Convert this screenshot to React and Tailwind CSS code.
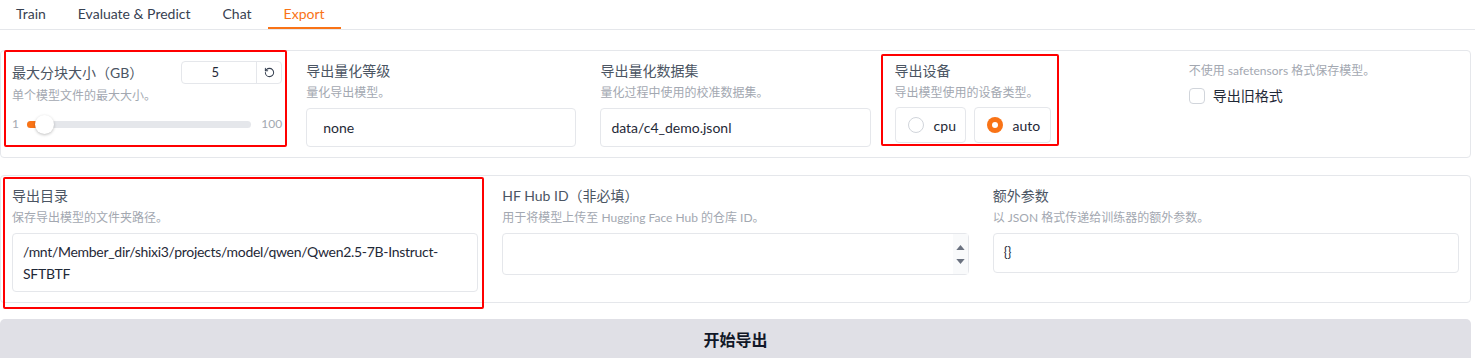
import { RotateCw } from 'lucide-react'

const font = { fontFamily: '"Source Sans Pro", Lato, "Noto Sans CJK SC", sans-serif' }

const Label = ({ children }) => (
    <div className="text-[14px] leading-[20px] text-[#4b5563]">{children}</div>
)

const Info = ({ children }) => (
    <div className="text-[12px] leading-[18px] text-[#a3a8b1] mt-[3px]">{children}</div>
)

// red annotation frame drawn over a block
const Marked = ({ children, className, frame }) => (
    <div className={`relative ${className || ''}`}>
        {children}
        <div className={`absolute border-2 border-[#ff0000] rounded-[2px] pointer-events-none ${frame}`}></div>
    </div>
)

const App = () => {
    const tabs = ['Train', 'Evaluate & Predict', 'Chat', 'Export']

    return (
        <div className="w-[1475px] h-[358px] overflow-hidden bg-white" style={font}>
            {/* tab bar */}
            <div className="flex border-b border-[#e5e7eb] h-[30px]">
                {tabs.map((t) => (
                    <div
                        key={t}
                        className={`px-4 text-[14px] leading-[28px] ${t === 'Export' ? 'text-[#f97316] border-b-2 border-[#f97316]' : 'text-[#374151]'}`}
                    >
                        {t}
                    </div>
                ))}
            </div>

            {/* first panel */}
            <div className="mt-[20px] mr-[4px] border border-[#e5e7eb] rounded-[4px] px-[11px] pt-[10px] grid grid-cols-5 gap-x-[24px] h-[108px]">
                <Marked frame="-left-[8px] -right-[5px] -top-[11px] -bottom-[14px]" className="h-[72px]">
                    <div className="flex items-center justify-between">
                        <Label>最大分块大小（GB）</Label>
                        <div className="flex h-[23px] border border-[#e5e7eb] rounded-[4px]">
                            <div className="w-[74px] pr-[8px] text-center text-[13px] leading-[21px] text-[#1f2937]">5</div>
                            <div className="w-[25px] border-l border-[#e5e7eb] flex items-center justify-center text-[#374151]">
                                <RotateCw size={11} strokeWidth={2.2} className="-scale-x-100" />
                            </div>
                        </div>
                    </div>
                    <Info>单个模型文件的最大大小。</Info>
                    <div className="flex items-center mt-[10px] text-[12px] text-[#a3a8b1]">
                        <span className="w-[15px]">1</span>
                        <div className="relative flex-1 h-[7px] bg-[#e5e7eb] rounded-full">
                            <div className="absolute left-0 top-0 h-[7px] w-[14px] bg-[#f97316] rounded-full"></div>
                            <div className="absolute left-[8px] -top-[6px] w-[19px] h-[19px] rounded-full bg-white shadow-[0_1px_3px_rgba(0,0,0,0.25)]"></div>
                        </div>
                        <span className="ml-[10px]">100</span>
                    </div>
                </Marked>

                <div>
                    <Label>导出量化等级</Label>
                    <Info>量化导出模型。</Info>
                    <div className="mt-[6px] h-[39px] border border-[#e5e7eb] rounded-[4px] flex items-center px-[16px] text-[14px] text-[#1f2937]">
                        none
                    </div>
                </div>

                <div>
                    <Label>导出量化数据集</Label>
                    <Info>量化过程中使用的校准数据集。</Info>
                    <div className="mt-[6px] h-[39px] border border-[#e5e7eb] rounded-[4px] flex items-center px-[10px] text-[14px] text-[#1f2937]">
                        data/c4_demo.jsonl
                    </div>
                </div>

                <div>
                    <Marked frame="-left-[14px] -right-[8px] -top-[7px] -bottom-[3px]" className="w-[156px]">
                        <Label>导出设备</Label>
                        <Info>导出模型使用的设备类型。</Info>
                        <div className="flex gap-[8px] mt-[5px]">
                            <div className="w-[71px] h-[36px] border border-[#e5e7eb] rounded-[4px] flex items-center gap-[10px] pl-[12px] text-[14px] text-[#1f2937]">
                                <span className="w-[16px] h-[16px] rounded-full border border-[#d1d5db]"></span>
                                cpu
                            </div>
                            <div className="w-[77px] h-[36px] border border-[#e5e7eb] rounded-[4px] flex items-center gap-[10px] pl-[12px] text-[14px] text-[#1f2937]">
                                <span className="w-[16px] h-[16px] rounded-full bg-[#f97316] flex items-center justify-center">
                                    <span className="w-[6px] h-[6px] rounded-full bg-white"></span>
                                </span>
                                auto
                            </div>
                        </div>
                    </Marked>
                </div>

                <div>
                    <div className="text-[12px] leading-[18px] text-[#a3a8b1] mt-[1px]">不使用 safetensors 格式保存模型。</div>
                    <label className="flex items-center gap-[8px] mt-[5px] text-[14px] text-[#1f2937]">
                        <span className="w-[16px] h-[16px] rounded-[4px] border border-[#d1d5db]"></span>
                        导出旧格式
                    </label>
                </div>
            </div>

            {/* second panel */}
            <div className="mt-[17px] mr-[4px] border border-[#e5e7eb] rounded-[4px] px-[11px] pt-[10px] grid grid-cols-3 gap-x-[24px] h-[128px]">
                <Marked frame="-left-[9px] -right-[6px] -top-[9px] -bottom-[7px]">
                    <Label>导出目录</Label>
                    <Info>保存导出模型的文件夹路径。</Info>
                    <div className="mt-[6px] h-[59px] border border-[#e5e7eb] rounded-[4px] px-[10px] py-[7px] text-[14px] leading-[22px] text-[#1f2937] whitespace-nowrap tracking-[-0.3px]">
                        /mnt/Member_dir/shixi3/projects/model/qwen/Qwen2.5-7B-Instruct-
                        <br />
                        SFTBTF
                    </div>
                </Marked>

                <div>
                    <Label>HF Hub ID（非必填）</Label>
                    <Info>用于将模型上传至 Hugging Face Hub 的仓库 ID。</Info>
                    <div className="mt-[6px] h-[42px] border border-[#e5e7eb] rounded-[4px] flex justify-end">
                        <div className="w-[15px] bg-[#f9fafb] flex flex-col items-center justify-center gap-[9px] text-[#6b7280]">
                            <svg width="9" height="5" viewBox="0 0 10 6"><path d="M0 6 L5 0 L10 6 Z" fill="currentColor" /></svg>
                            <svg width="9" height="5" viewBox="0 0 10 6"><path d="M0 0 L5 6 L10 0 Z" fill="currentColor" /></svg>
                        </div>
                    </div>
                </div>

                <div>
                    <Label>额外参数</Label>
                    <Info>以 JSON 格式传递给训练器的额外参数。</Info>
                    <div className="mt-[6px] h-[40px] border border-[#e5e7eb] rounded-[4px] flex items-center px-[10px] text-[13px] text-[#1f2937]">
                        {'{}'}
                    </div>
                </div>
            </div>

            {/* submit */}
            <div className="mt-[16px] mr-[4px] h-[48px] bg-[#e0e0e6] rounded-[5px] flex items-start justify-center pt-[9px] text-[16px] font-bold text-[#111827]">
                开始导出
            </div>
        </div>
    )
}

export default App
